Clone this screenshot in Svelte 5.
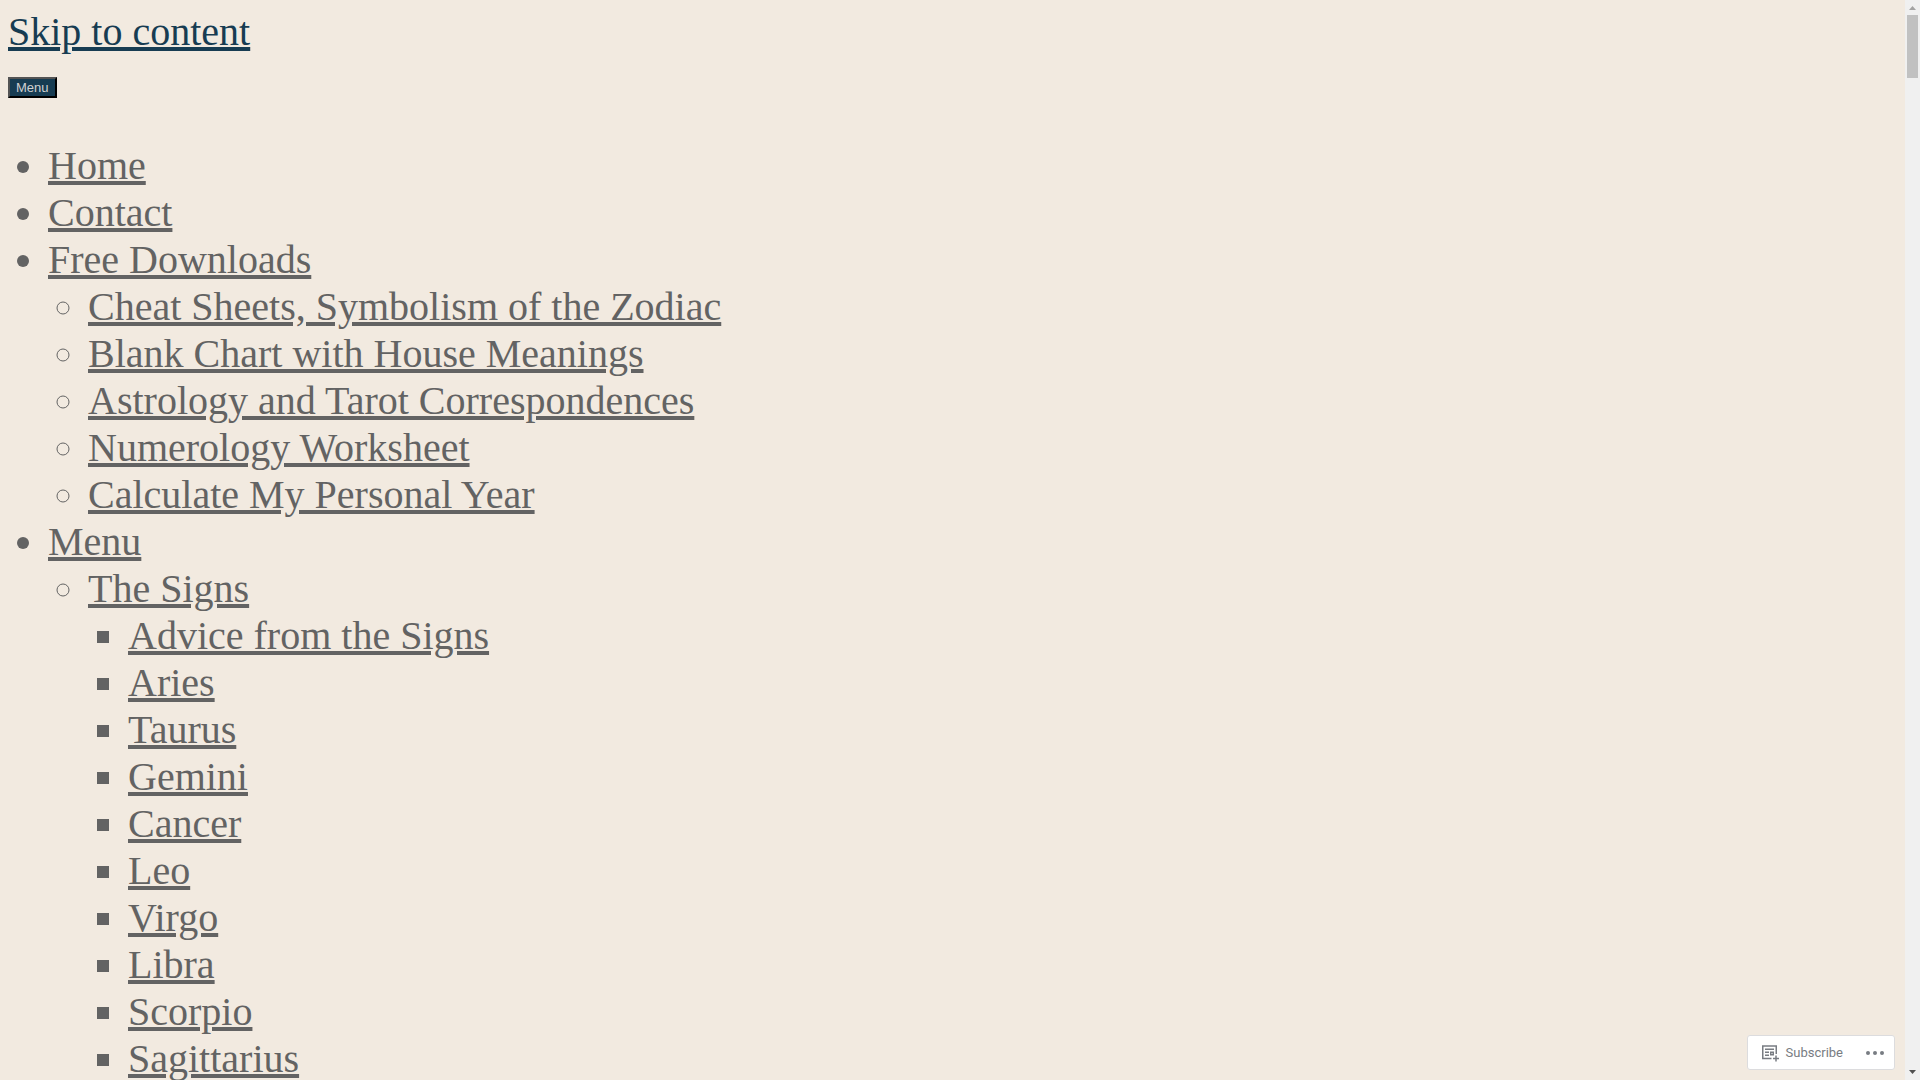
<script lang="ts">
	type Item = {
		text: string;
		children?: Item[];
	};

	const signs = [
		'Advice from the Signs',
		'Aries',
		'Taurus',
		'Gemini',
		'Cancer',
		'Leo',
		'Virgo',
		'Libra',
		'Scorpio',
		'Sagittarius'
	];

	const items: Item[] = [
		{ text: 'Home' },
		{ text: 'Contact' },
		{
			text: 'Free Downloads',
			children: [
				{ text: 'Cheat Sheets, Symbolism of the Zodiac' },
				{ text: 'Blank Chart with House Meanings' },
				{ text: 'Astrology and Tarot Correspondences' },
				{ text: 'Numerology Worksheet' },
				{ text: 'Calculate My Personal Year' }
			]
		},
		{
			text: 'Menu',
			children: [{ text: 'The Signs', children: signs.map((text) => ({ text })) }]
		}
	];
</script>

{#snippet list(entries: Item[])}
	<ul>
		{#each entries as entry (entry.text)}
			<li>
				<a href="#content">{entry.text}</a>
				{#if entry.children}
					{@render list(entry.children)}
				{/if}
			</li>
		{/each}
	</ul>
{/snippet}

<div class="window">
	<div class="page">
		<a class="skip-link" href="#content">Skip to content</a>
		<nav id="content">
			<button class="menu-toggle">Menu</button>
			{@render list(items)}
		</nav>
	</div>
	<div class="scrollbar" aria-hidden="true">
		<svg class="arrow up" width="15" height="15" viewBox="0 0 15 15">
			<path d="M4 10h7L7.5 6z" />
		</svg>
		<div class="thumb"></div>
		<svg class="arrow down" width="15" height="15" viewBox="0 0 15 15">
			<path d="M4 5h7L7.5 9z" />
		</svg>
	</div>
</div>

<div class="actionbar">
	<button class="subscribe">
		<svg width="20" height="20" viewBox="0 0 20 20" fill="none" stroke="currentColor">
			<path d="M16.25 11V3H2.75v12.5H11.5" stroke-width="1.5" />
			<path d="M5 6.25h9M5 9.25h4M5 12.25h4" stroke-width="1.5" />
			<path d="M10.75 9.25h2.5v2.5h-2.5z" stroke-width="1.5" />
			<path d="M16 12.5v6M13 15.5h6" stroke-width="1.5" />
		</svg>
		Subscribe
	</button>
	<button class="more" aria-label="More">
		<svg width="20" height="20" viewBox="0 0 20 20">
			<circle cx="3" cy="10" r="2" />
			<circle cx="10" cy="10" r="2" />
			<circle cx="17" cy="10" r="2" />
		</svg>
	</button>
</div>

<style>
	:global(body) {
		background: #f2eae0;
	}

	.window {
		display: flex;
		height: 100vh;
	}

	.page {
		flex: 1;
		box-sizing: border-box;
		padding: 8px;
		overflow-y: auto;
		scrollbar-width: none;
		font-family: 'Liberation Serif', 'Times New Roman', serif;
		font-size: 40px;
		line-height: normal;
		color: #636363;
	}

	a {
		color: inherit;
		text-decoration-thickness: 4px;
	}

	.skip-link {
		color: #173c52;
	}

	nav {
		display: flex;
		flex-direction: column;
		align-items: flex-start;
		gap: 44px;
		margin-top: 22px;
	}

	.menu-toggle {
		padding: 1px 6px;
		border: 2px outset #000;
		background: #173c52;
		color: #d0d0d0;
		font-family: 'Liberation Sans', Arial, sans-serif;
		font-size: 13px;
		line-height: 15px;
	}

	ul {
		margin: 0;
		padding-left: 40px;
	}

	.scrollbar {
		display: flex;
		flex-direction: column;
		width: 15px;
		background: #f0f0f0;
	}

	.thumb {
		height: 63px;
		margin: 0 2px;
		background: #c1c1c1;
	}

	.arrow.up {
		fill: #a3a3a3;
	}

	.arrow.down {
		margin-top: auto;
		fill: #505050;
	}

	.actionbar {
		position: fixed;
		right: 25px;
		bottom: 10px;
		display: flex;
		align-items: center;
		box-sizing: border-box;
		height: 35px;
		border: 1px solid #dcdcde;
		border-radius: 3px;
		background: #fff;
	}

	.actionbar button {
		display: flex;
		align-items: center;
		padding: 0;
		border: 0;
		background: none;
		color: #787c82;
		font-family: Roboto, sans-serif;
		font-size: 13px;
		line-height: 20px;
	}

	.actionbar .subscribe {
		gap: 6px;
		margin-left: 12px;
	}

	.actionbar .more {
		margin: 0 9px 0 22px;
	}

	.more svg {
		fill: currentColor;
	}
</style>
